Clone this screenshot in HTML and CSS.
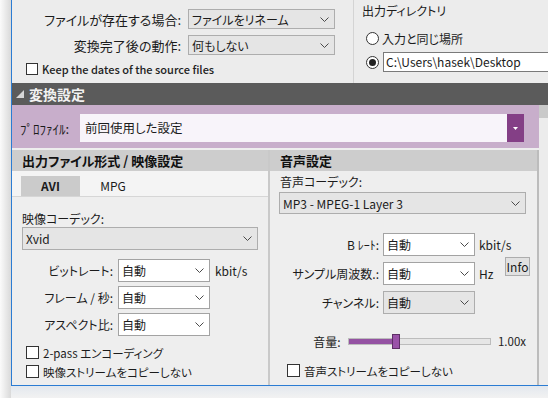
FILE: index.html
```html
<!DOCTYPE html>
<html lang="ja">
<head>
<meta charset="utf-8">
<title>変換設定</title>
<link rel="stylesheet" href="styles.css">
</head>
<body>
<div class="screen">
  <div class="shadow"></div>
  <div class="frame">
    <div class="window">
      <div class="top">
        <div class="top-left">
          <div class="opt-grid">
            <span class="lbl">ファイルが存在する場合:</span>
            <div class="sel gray"><span>ファイルをリネーム</span><svg class="chev" width="9" height="5" viewBox="0 0 9 5"><path d="M0.5 0.5 L4.5 4.5 L8.5 0.5" fill="none" stroke="#4a4a4a" stroke-width="1"/></svg></div>
            <span class="lbl">変換完了後の動作:</span>
            <div class="sel gray"><span>何もしない</span><svg class="chev" width="9" height="5" viewBox="0 0 9 5"><path d="M0.5 0.5 L4.5 4.5 L8.5 0.5" fill="none" stroke="#4a4a4a" stroke-width="1"/></svg></div>
          </div>
          <div class="keep"><span class="box small"></span><span>Keep the dates of the source files</span></div>
        </div>
        <div class="top-right">
          <div class="dir-title">出力ディレクトリ</div>
          <div class="radio-row first"><span class="radio"></span><span>入力と同じ場所</span></div>
          <div class="radio-row"><span class="radio on"></span><div class="path">C:\Users\hasek\Desktop</div></div>
        </div>
      </div>
      <div class="hdr"><svg class="tri" width="8" height="8" viewBox="0 0 8 8"><polygon points="8,0 8,8 0,8" fill="#d6d6d6"/></svg><span>変換設定</span></div>
      <div class="body">
        <div class="content">
          <div class="profile">
            <span class="plabel">ﾌﾟﾛﾌｧｲﾙ:</span>
            <div class="psel">
              <div class="pval">前回使用した設定</div>
              <div class="pbtn"><svg width="5" height="3" viewBox="0 0 5 3"><polygon points="0,0 5,0 2.5,3" fill="#ffffff"/></svg></div>
            </div>
          </div>
          <div class="panels">
            <div class="panel video">
              <div class="ph">出力ファイル形式 / 映像設定</div>
              <div class="tabs"><div class="tab on">AVI</div><div class="tab mpg">MPG</div></div>
              <div class="vbody">
                <div class="codec-lbl">映像コーデック:</div>
                <div class="sel gray wide"><span class="latin">Xvid</span><svg class="chev" width="9" height="5" viewBox="0 0 9 5"><path d="M0.5 0.5 L4.5 4.5 L8.5 0.5" fill="none" stroke="#4a4a4a" stroke-width="1"/></svg></div>
                <div class="rows">
                  <span class="lbl">ビットレート:</span>
                  <div class="sel white"><span>自動</span><svg class="chev" width="9" height="5" viewBox="0 0 9 5"><path d="M0.5 0.5 L4.5 4.5 L8.5 0.5" fill="none" stroke="#4a4a4a" stroke-width="1"/></svg></div>
                  <span class="unit">kbit/s</span>
                  <span class="lbl">フレーム / 秒:</span>
                  <div class="sel white"><span>自動</span><svg class="chev" width="9" height="5" viewBox="0 0 9 5"><path d="M0.5 0.5 L4.5 4.5 L8.5 0.5" fill="none" stroke="#4a4a4a" stroke-width="1"/></svg></div>
                  <span></span>
                  <span class="lbl">アスペクト比:</span>
                  <div class="sel white"><span>自動</span><svg class="chev" width="9" height="5" viewBox="0 0 9 5"><path d="M0.5 0.5 L4.5 4.5 L8.5 0.5" fill="none" stroke="#4a4a4a" stroke-width="1"/></svg></div>
                  <span></span>
                </div>
                <div class="checks">
                  <div class="chk"><span class="box"></span><span>2-pass エンコーディング</span></div>
                  <div class="chk"><span class="box"></span><span>映像ストリームをコピーしない</span></div>
                </div>
              </div>
            </div>
            <div class="panel audio">
              <div class="ph">音声設定</div>
              <div class="abody">
                <div class="acodec-lbl">音声コーデック:</div>
                <div class="sel gray asel"><span class="latin">MP3 - MPEG-1 Layer 3</span><svg class="chev" width="9" height="5" viewBox="0 0 9 5"><path d="M0.5 0.5 L4.5 4.5 L8.5 0.5" fill="none" stroke="#4a4a4a" stroke-width="1"/></svg></div>
                <div class="arows">
                  <span class="lbl r1">B ﾚｰﾄ:</span>
                  <div class="sel white r1"><span>自動</span><svg class="chev" width="9" height="5" viewBox="0 0 9 5"><path d="M0.5 0.5 L4.5 4.5 L8.5 0.5" fill="none" stroke="#4a4a4a" stroke-width="1"/></svg></div>
                  <span class="unit r1">kbit/s</span>
                  <span class="lbl r2">サンプル周波数.:</span>
                  <div class="sel white r2"><span>自動</span><svg class="chev" width="9" height="5" viewBox="0 0 9 5"><path d="M0.5 0.5 L4.5 4.5 L8.5 0.5" fill="none" stroke="#4a4a4a" stroke-width="1"/></svg></div>
                  <span class="unit r2">Hz</span>
                  <span class="lbl r3">チャンネル:</span>
                  <div class="sel gray r3"><span>自動</span><svg class="chev" width="9" height="5" viewBox="0 0 9 5"><path d="M0.5 0.5 L4.5 4.5 L8.5 0.5" fill="none" stroke="#4a4a4a" stroke-width="1"/></svg></div>
                  <div class="info">Info</div>
                </div>
                <div class="vol">
                  <span class="vol-lbl">音量:</span>
                  <div class="slider"><div class="fill" style="width:33%"></div><div class="thumb"></div></div>
                  <span class="vol-val">1.00x</span>
                </div>
                <div class="chk achk"><span class="box"></span><span>音声ストリームをコピーしない</span></div>
              </div>
            </div>
          </div>
        </div>
        <div class="scroll"><div class="scroll-top"></div></div>
      </div>
    </div>
    <div class="bottom-strip"></div>
  </div>
</div>
</body>
</html>
```
FILE: styles.css
```css
* { box-sizing: border-box; }
html, body { margin: 0; padding: 0; }
body {
  width: 548px;
  height: 398px;
  overflow: hidden;
  background: #f0f0f0;
  font-family: "Noto Sans CJK JP", "Noto Sans", sans-serif;
  font-feature-settings: "palt" 1;
  font-size: 12px;
  color: #1b1b1b;
}
.screen { display: flex; height: 398px; }
.shadow { width: 11px; background: linear-gradient(to right, #fbfbfb, #d9d9d9); }
.frame { flex: 1; display: flex; flex-direction: column; min-width: 0; }
.window {
  height: 386px;
  border-left: 1px solid #2b7cd3;
  border-bottom: 1px solid #2b7cd3;
  display: flex;
  flex-direction: column;
  overflow: hidden;
}
.bottom-strip { flex: 1; background: linear-gradient(#e3e8ee, #f2f2f2); }

/* top */
.top { height: 83px; display: flex; background: #ececec; flex-shrink: 0; }
.top-left { width: 341px; padding-top: 9px; flex-shrink: 0; }
.opt-grid {
  display: grid;
  grid-template-columns: 169px 147px;
  column-gap: 7px;
  row-gap: 6px;
  grid-auto-rows: 20px;
}
.opt-grid .lbl { font-size: 13px; }
.lbl { text-align: right; white-space: nowrap; align-self: center; }
.sel {
  display: flex;
  align-items: center;
  justify-content: space-between;
  border: 1px solid #adadad;
  padding: 0 5px 0 3px;
  height: 100%;
  white-space: nowrap;
  overflow: hidden;
}
.sel.gray { background: #e5e5e5; }
.sel.white { background: #ffffff; border-color: #a3a3a3; }
.chev { flex-shrink: 0; }
.keep {
  display: flex;
  align-items: center;
  gap: 4px;
  margin-top: 8px;
  padding-left: 14px;
  height: 12px;
  font-size: 11px;
  font-weight: 500;
  color: #222;
  white-space: nowrap;
}
.box { width: 13px; height: 13px; border: 1px solid #333; background: #fff; flex-shrink: 0; }
.box.small { width: 12px; height: 12px; }

.top-right { flex: 1; border-left: 1px solid #d4d4d4; padding: 3px 0 0 8px; min-width: 0; }
.dir-title { line-height: 16px; font-size: 12px; }
.radio-row { display: flex; align-items: center; height: 20px; padding-left: 4px; gap: 3px; white-space: nowrap; }
.radio-row.first { margin-top: 9px; font-size: 12px; }
.radio-row + .radio-row { margin-top: 4px; }
.radio {
  width: 13px; height: 13px;
  border: 1px solid #333;
  border-radius: 50%;
  background: #fff;
  display: flex; align-items: center; justify-content: center;
  flex-shrink: 0;
}
.radio.on::after { content: ""; width: 7px; height: 7px; border-radius: 50%; background: #222; }
.path {
  margin-left: 1px;
  height: 20px;
  width: 220px;
  border: 1px solid #7a7a7a;
  background: #fff;
  padding-left: 2px;
  line-height: 18px;
  font-size: 12px;
  flex-shrink: 0;
}

/* section header */
.hdr {
  height: 22px;
  background: #5b5b5b;
  color: #f2f2f2;
  display: flex;
  align-items: center;
  padding-left: 4px;
  gap: 5px;
  font-weight: 700;
  font-size: 14px;
  flex-shrink: 0;
}

.body { flex: 1; display: flex; min-height: 0; }
.content { flex: 1; display: flex; flex-direction: column; min-width: 0; }
.scroll { width: 9px; background: #ececec; }
.scroll-top { height: 13px; background: #c9c9c9; }

.profile {
  height: 43px;
  background: #c8aecb;
  display: flex;
  align-items: center;
  padding: 3px 15px 0 8px;
  flex-shrink: 0;
}
.plabel { width: 60px; font-size: 13px; white-space: nowrap; }
.psel { flex: 1; display: flex; height: 28px; }
.pval { flex: 1; background: #f8f4fa; padding-left: 5px; line-height: 28px; font-size: 12.5px; }
.pbtn { width: 17px; background: #843f86; display: flex; align-items: center; justify-content: center; }

.panels { flex: 1; display: flex; background: #eeeeee; padding-top: 2px; }
.panel.video { width: 258px; border-right: 2px solid #c9c9c9; flex-shrink: 0; }
.panel.audio { flex: 1; border-right: 2px solid #bcbcbc; min-width: 0; }
.ph { height: 21px; background: #cdcdcd; padding-left: 10px; font-weight: 700; font-size: 13px; line-height: 21px; color: #111; white-space: nowrap; }

.tabs { height: 26px; background: #f4f4f4; border-bottom: 1px solid #d6d6d6; padding: 5px 0 0 9px; display: flex; }
.tab { width: 59px; text-align: center; line-height: 20px; font-size: 12px; }
.tab.on { background: #cbcbcb; font-weight: 700; }
.tab.mpg { width: 66px; }

.vbody { padding: 0 10px; }
.codec-lbl { margin-top: 14px; line-height: 16px; }
.sel.wide { height: 23px; }
.latin { font-size: 12px; }
.rows {
  display: grid;
  grid-template-columns: 91px 92px auto;
  column-gap: 5px;
  row-gap: 4px;
  grid-auto-rows: 23px;
  margin-top: 9px;
}
.unit { align-self: center; white-space: nowrap; }
.checks { margin-top: 7px; }
.chk { display: flex; align-items: center; gap: 4px; height: 19px; padding-left: 4px; white-space: nowrap; font-size: 11.5px; }

.abody { padding: 0 11px 0 10px; }
.acodec-lbl { margin-top: 3px; line-height: 16px; }
.sel.asel { margin: 2px 0 0 -1px; height: 22px; }
.arows {
  display: grid;
  grid-template-columns: 99px 92px 1fr;
  grid-template-rows: 23px 23px 23px;
  column-gap: 4px;
  row-gap: 6px;
  margin-top: 19px;
}
.r1 { grid-row: 1; }
.r2 { grid-row: 2; }
.r3 { grid-row: 3; }
.arows .lbl.r1, .arows .lbl.r2, .arows .lbl.r3 { grid-column: 1; }
.arows .sel.r1, .arows .sel.r2, .arows .sel.r3 { grid-column: 2; }
.arows .unit { grid-column: 3; justify-self: start; }
.info {
  grid-column: 3;
  grid-row: 1 / span 2;
  justify-self: end;
  align-self: start;
  margin: 24px -4px 0 0;
  width: 25px;
  height: 19px;
  border: 1px solid #adadad;
  background: #e1e1e1;
  text-align: center;
  line-height: 17px;
  font-size: 12px;
}
.vol { display: flex; align-items: center; height: 20px; margin-top: 17px; }
.vol-lbl { width: 61px; text-align: right; }
.slider { position: relative; width: 144px; height: 7px; margin-left: 7px; border: 1px solid #bcbcbc; background: #e6e6e6; }
.fill { height: 100%; background: #9452a2; }
.thumb { position: absolute; left: 43px; top: -5px; width: 8px; height: 15px; background: #9a52a8; border: 1px solid #5e2f66; }
.vol-val { margin-left: 7px; font-size: 11.5px; color: #222; }
.achk { margin-top: 10px; padding-left: 7px; }
```
